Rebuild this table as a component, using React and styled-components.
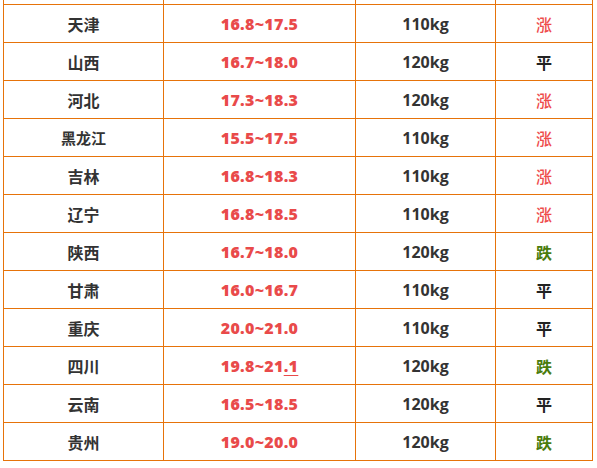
import React from "react";
import styled, { createGlobalStyle } from "styled-components";

const GlobalStyle = createGlobalStyle`
    html, body {
        margin: 0;
        padding: 0;
        background: #ffffff;
    }
`;

const Frame = styled.div`
    width: 597px;
    height: 468px;
    overflow: hidden;
    padding-left: 3px;
    box-sizing: border-box;
`;

const Table = styled.table`
    border-collapse: collapse;
    table-layout: fixed;
    width: 589px;
    margin-top: -34px;
`;

const Cell = styled.td`
    height: 37px;
    padding: 0;
    border: 1px solid rgb(230, 115, 10);
    text-align: center;
    vertical-align: middle;
    line-height: 20px;
    font-family: "Noto Sans CJK SC", "Open Sans", sans-serif;
    color: #333333;
`;

const Province = styled.span`
    font-size: ${props => props.$small ? '15px' : '16px'};
    font-weight: 700;
    color: #333333;
`;

const Price = styled.span`
    font-family: "Open Sans", "Noto Sans CJK SC", sans-serif;
    font-size: 16px;
    font-weight: 800;
    color: #e94a4a;
    letter-spacing: 0.3px;
`;

const Underlined = styled.span`
    text-decoration: underline;
    text-underline-offset: 3px;
    text-decoration-thickness: 1px;
`;

const Weight = styled.span`
    font-family: "Open Sans", "Noto Sans CJK SC", sans-serif;
    font-size: 16px;
    font-weight: 700;
    color: #333333;
`;

const trendColors = {
    '涨': '#ee4c4c',
    '平': '#222222',
    '跌': '#4a7c0c',
};

const Trend = styled.span`
    font-family: "Noto Sans CJK SC", sans-serif;
    font-size: 16px;
    font-weight: ${props => props.$value === '涨' ? 500 : 700};
    color: ${props => trendColors[props.$value]};
`;

const rows = [
    { name: '天津', price: '16.8~17.5', weight: '110kg', trend: '涨' },
    { name: '山西', price: '16.7~18.0', weight: '120kg', trend: '平' },
    { name: '河北', price: '17.3~18.3', weight: '120kg', trend: '涨' },
    { name: '黑龙江', price: '15.5~17.5', weight: '110kg', trend: '涨', small: true },
    { name: '吉林', price: '16.8~18.3', weight: '110kg', trend: '涨' },
    { name: '辽宁', price: '16.8~18.5', weight: '110kg', trend: '涨' },
    { name: '陕西', price: '16.7~18.0', weight: '120kg', trend: '跌' },
    { name: '甘肃', price: '16.0~16.7', weight: '110kg', trend: '平' },
    { name: '重庆', price: '20.0~21.0', weight: '110kg', trend: '平' },
    { name: '四川', price: '19.8~21', tail: '.1', weight: '120kg', trend: '跌' },
    { name: '云南', price: '16.5~18.5', weight: '120kg', trend: '平' },
    { name: '贵州', price: '19.0~20.0', weight: '120kg', trend: '跌' },
];

function App() {
    return (
        <>
            <GlobalStyle />
            <Frame>
                <Table>
                    <colgroup>
                        <col style={{ width: 160 }} />
                        <col style={{ width: 192 }} />
                        <col style={{ width: 140 }} />
                        <col style={{ width: 97 }} />
                    </colgroup>
                    <tbody>
                        <tr>
                            <Cell />
                            <Cell />
                            <Cell />
                            <Cell />
                        </tr>
                        {rows.map((row, index) => {
                            return (
                                <tr key={index}>
                                    <Cell>
                                        <Province $small={row.small}>{row.name}</Province>
                                    </Cell>
                                    <Cell>
                                        <Price>
                                            {row.price}
                                            {row.tail && <Underlined>{row.tail}</Underlined>}
                                        </Price>
                                    </Cell>
                                    <Cell>
                                        <Weight>{row.weight}</Weight>
                                    </Cell>
                                    <Cell>
                                        <Trend $value={row.trend}>{row.trend}</Trend>
                                    </Cell>
                                </tr>
                            )
                        })}
                    </tbody>
                </Table>
            </Frame>
        </>
    )
}

export default App;
